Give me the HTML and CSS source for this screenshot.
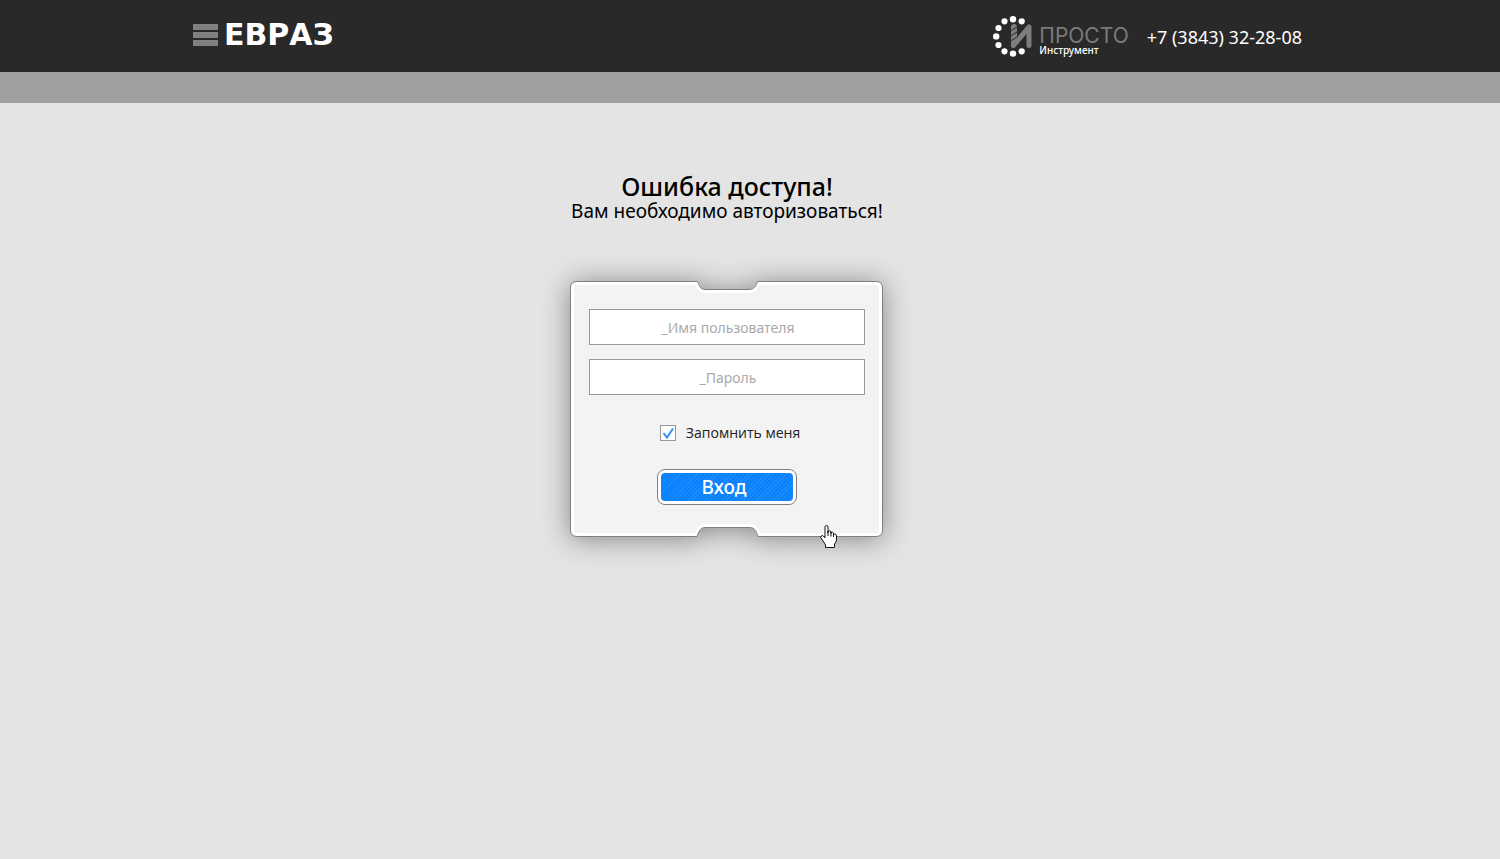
FILE: index.html
```html
<!DOCTYPE html>
<html lang="ru">
<head>
<meta charset="utf-8">
<title>Ошибка доступа</title>
<link rel="stylesheet" href="styles.css">
</head>
<body>
<header class="header">
  <div class="header-inner">
    <a class="brand" href="#">
      <svg class="brand-bars" viewBox="0 0 25 22" aria-hidden="true"><path d="M0 0h25v6H0zM0 8h25v6H0zM0 16h25v6H0z"/></svg>
      <span>ЕВРАЗ</span>
    </a>
    <div class="contact">
      <a class="partner" href="#">
        <svg class="partner-mark" viewBox="0 0 40 42" aria-hidden="true">
          <g fill="#fff">
            <circle cx="20" cy="4.200" r="3.200"/><circle cx="28.700" cy="6.300" r="3.100"/>
            <circle cx="11.500" cy="6.300" r="3.100"/><circle cx="5.500" cy="13" r="3.100"/><circle cx="3.200" cy="21.400" r="3.200"/>
            <circle cx="5.500" cy="30" r="3.100"/><circle cx="11.500" cy="36.300" r="3.100"/><circle cx="20" cy="38.600" r="3.200"/><circle cx="28.700" cy="36.300" r="3.100"/>
          </g>
          <path d="M20.500 30.500L36 12v18.500" fill="none" stroke="#7d7d7d" stroke-width="5" stroke-linecap="round" stroke-linejoin="round"/>
          <path d="M18 11l2-2h2l2 2v17l-3 5q-3 0-3-3z" fill="#7d7d7d"/>
          <path d="M17.500 16l6.500-4M17.500 21l6.500-4M17.500 26l6.500-4" stroke="#292929"/>
        </svg>
        <span class="partner-name"><span class="partner-top">ПРОСТО</span><span class="partner-sub">Инструмент</span></span>
      </a>
      <a class="phone" href="tel:+73843322808">+7 (3843) 32-28-08</a>
    </div>
  </div>
</header>
<div class="strip"></div>
<main class="main">
  <h1 class="title">Ошибка доступа!</h1>
  <p class="subtitle">Вам необходимо авторизоваться!</p>
  <form class="card">
    <svg class="card-shape" viewBox="0 0 313 256" aria-hidden="true">
      <defs>
        <path id="plate" d="M7 .5H127.500C129 4 130 8.500 135 8.500H179C184 8.500 186 5 187.500 .5H306Q312.500 .5 312.500 7V249Q312.500 255.500 306 255.500H188C186.500 251 185 246.500 180 246.500H135C130 246.500 128.500 251 127 255.500H7Q.5 255.500 .5 249V7Q.5 .5 7 .5Z"/>
        <clipPath id="plate-clip"><use href="#plate"/></clipPath>
      </defs>
      <use href="#plate" fill="#f3f3f3"/>
      <use href="#plate" fill="none" stroke="#fff" stroke-width="7" clip-path="url(#plate-clip)"/>
      <use href="#plate" fill="none" stroke="#808080"/>
    </svg>
    <input class="field" type="text" placeholder="_Имя пользователя" aria-label="Имя пользователя">
    <input class="field" type="password" placeholder="_Пароль" aria-label="Пароль">
    <label class="remember"><input class="check" type="checkbox" checked><span>Запомнить меня</span></label>
    <button class="submit" type="button"><span class="submit-face">Вход</span></button>
    <svg class="pointer" viewBox="0 0 17 23" aria-hidden="true">
      <path d="M5 12.500V2Q5 .5 6.500 .5T8 2V8V6.500Q9.500 5 11 6.500V8.500V7.500Q12.500 6.500 13.500 8V10V9Q16.500 8.500 16.500 11V15Q16.500 17 14.500 19V22.500H5.500V20Q4.500 18 3 16L.8 12.500Q.5 10.500 2.500 10.500Q3.500 11 5 13" fill="#fff" stroke="#151515"/>
      <path d="M8 6v5M11 7v4.500M13.500 8.500v3.500" stroke="#151515"/>
    </svg>
  </form>
</main>
</body>
</html>
```
FILE: styles.css
```css
* { box-sizing: border-box; }
body {
  margin: 0;
  min-height: 100vh;
  background: #e4e4e4;
  color: #000;
  font-family: "Noto Sans", "Open Sans", sans-serif;
}
a { color: inherit; text-decoration: none; }
.header { background: #292929; color: #fff; }
.header-inner {
  display: flex;
  align-items: center;
  justify-content: space-between;
  max-width: 1114px;
  height: 72px;
  margin: 0 auto;
}
.brand {
  display: flex;
  align-items: center;
  gap: 6px;
  padding-bottom: 2px;
  font: 700 30px/40px "DejaVu Sans", sans-serif;
}
.brand-bars { width: 25px; height: 22px; fill: #808080; }
.contact { display: flex; align-items: center; gap: 18px; padding-right: 5px; }
.partner { display: flex; align-items: center; gap: 6px; }
.partner-mark { width: 40px; height: 42px; }
.partner-name { display: flex; flex-direction: column; padding-top: 10px; }
.partner-top { color: #7b7b7b; font: 400 21px/18px Inter, sans-serif; }
.partner-sub { font-size: 10px; line-height: 10px; font-weight: 500; }
.phone { font-size: 18px; line-height: 24px; padding-top: 2px; }
.strip { height: 31px; background: #a0a0a0; }
.main {
  display: flex;
  flex-direction: column;
  align-items: center;
  padding: 68px 46px 60px 0;
}
.title { margin: 0; font-size: 25px; line-height: 30px; font-weight: 500; }
.subtitle { margin: 0; font-size: 19px; line-height: 20px; font-weight: 400; }
.card {
  position: relative;
  display: flex;
  flex-direction: column;
  align-items: center;
  gap: 14px;
  width: 313px;
  margin: 60px 1px 0 0;
  padding: 28px 18px 32px 19px;
}
.card-shape {
  position: absolute;
  inset: 0;
  z-index: -1;
  width: 100%;
  height: 100%;
  overflow: visible;
  filter: drop-shadow(0 2px 14px rgba(0, 0, 0, .42));
}
.field {
  width: 100%;
  height: 36px;
  padding: 0 6px 0 8px;
  border: 1px solid #999;
  border-radius: 0;
  background: #fff;
  font: 400 14px/20px "Noto Sans", sans-serif;
  text-align: center;
}
.field::placeholder { color: #aaa; opacity: 1; }
.remember {
  display: flex;
  align-items: center;
  gap: 10px;
  margin: 14px 0 12px;
  padding-left: 6px;
  color: #222;
  font: 400 14px/20px "Open Sans", sans-serif;
}
.check {
  appearance: none;
  width: 16px;
  height: 16px;
  margin: 0;
  border: 1px solid #999;
  background: #fff url("data:image/svg+xml,%3Csvg xmlns='http://www.w3.org/2000/svg' viewBox='0 0 14 14'%3E%3Cpath d='M2.500 7l3.500 4.500L12 2.500' fill='none' stroke='%233590ef' stroke-width='2'/%3E%3C/svg%3E");
}
.submit {
  width: 140px;
  height: 36px;
  padding: 3px;
  border: 1px solid #808080;
  border-radius: 8px;
  background: #fff;
  cursor: pointer;
}
.submit-face {
  display: block;
  height: 28px;
  padding-right: 6px;
  border-radius: 4px;
  background: repeating-linear-gradient(135deg, #0b80fc 0 2px, #1e8eff 2px 3px);
  color: #fff;
  font: 500 19px/28px "Noto Sans", sans-serif;
}
.pointer { position: absolute; left: 250px; bottom: -11px; width: 17px; height: 23px; }
```
